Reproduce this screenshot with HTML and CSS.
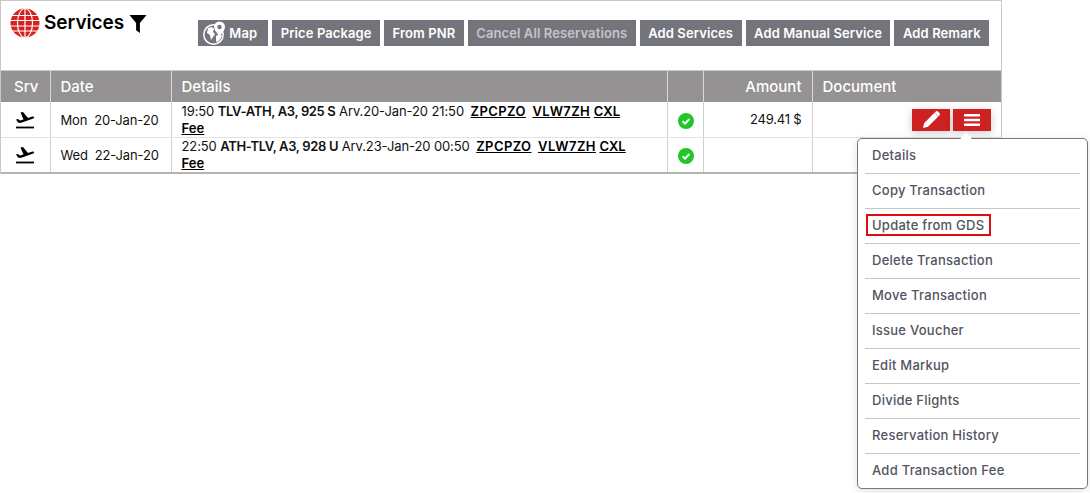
FILE: index.html
```html
<!DOCTYPE html>
<html lang="en">

<head>
    <meta charset="UTF-8">
    <title>Services</title>
    <link rel="stylesheet" href="styles.css">
</head>

<body>
    <div class="panel">
        <div class="toolbar">
            <div class="title">
                <svg class="logo" width="30" height="30" viewBox="0 0 30 30">
                    <circle cx="15" cy="15" r="14.5" fill="#d7201f"/>
                    <g fill="none" stroke="#fff" stroke-width="1.2">
                        <ellipse cx="15" cy="15" rx="7.500" ry="14.5"/>
                        <path d="M15 0v30M2 7.500h26M0 12.500h30M0 18h30M2 23h26"/>
                    </g>
                </svg>
                <h1>Services</h1>
                <svg class="filter" width="18" height="18" viewBox="0 0 18 19">
                    <path d="M0 0h18L11 8.500V19L7 16V8.500z" fill="#000"/>
                </svg>
            </div>
            <div class="actions">
                <button class="btn btn-map">
                    <svg width="23" height="24" viewBox="0 0 23 24">
                        <circle cx="10.500" cy="13.500" r="9.700" fill="none" stroke="#fff" stroke-width="1.500"/>
                        <path d="M5 7l4-1 2 2-1 3 2 2-2 3-2 3-1-5-3-2zM13 15l4-2 2 2-3 5-3 1z" fill="#fff"/>
                        <circle cx="16.500" cy="6" r="5.500" fill="#fff"/>
                        <path d="M12 9l4.500 7 4.500-7z" fill="#fff"/>
                        <circle cx="16.500" cy="6" r="2.200" fill="#74757c"/>
                    </svg>
                    Map
                </button>
                <button class="btn">Price Package</button>
                <button class="btn">From PNR</button>
                <button class="btn btn-muted">Cancel All Reservations</button>
                <button class="btn">Add Services</button>
                <button class="btn">Add Manual Service</button>
                <button class="btn">Add Remark</button>
            </div>
        </div>

        <table class="services">
            <colgroup>
                <col class="col-srv">
                <col class="col-date">
                <col class="col-details">
                <col class="col-status">
                <col class="col-amount">
                <col class="col-doc">
            </colgroup>
            <thead>
                <tr>
                    <th class="center">Srv</th>
                    <th>Date</th>
                    <th>Details</th>
                    <th></th>
                    <th class="right">Amount</th>
                    <th>Document</th>
                </tr>
            </thead>
            <tbody>
                <tr>
                    <td class="center">
                        <svg class="plane" width="20" height="18" viewBox="0 0 20 18">
                            <path d="M1 16.500h18" stroke="#000" stroke-width="1.800"/>
                            <path d="M1 8.500l2-.5 2 1.500 3.500-1L5.500 1.500 8 1l5 6 4.500-1.500c1.500-.4 2.500 1.200.8 2L5.500 12 3 11.500z" fill="#000"/>
                        </svg>
                    </td>
                    <td class="date">Mon&nbsp; 20-Jan-20</td>
                    <td class="details">19:50 <b>TLV-ATH, A3, 925 S</b> Arv.20-Jan-20 21:50 <a href="#">ZPCPZO</a> <a href="#">VLW7ZH</a> <a class="fee" href="#">CXL<br>Fee</a></td>
                    <td class="center status">
                        <svg width="16" height="16" viewBox="0 0 16 16">
                            <circle cx="8" cy="8" r="8" fill="#22c52a"/>
                            <path d="M4.500 8.200l2.500 2.300 4.500-4.500" fill="none" stroke="#fff" stroke-width="2"/>
                        </svg>
                    </td>
                    <td class="right amount">249.41 $</td>
                    <td class="doc">
                        <div class="doc-btns">
                            <button class="icon-btn">
                                <svg width="17" height="17" viewBox="0 0 17 17">
                                    <path d="M0 17l1.200-5L11.500 1.700l3.800 3.800L5 15.800zM12.500.700c.8-.8 1.800-.8 2.500-.1l1.400 1.400c.7.700.7 1.700-.1 2.500l-.8.700-3.800-3.800z" fill="#fff"/>
                                </svg>
                            </button>
                            <button class="icon-btn">
                                <svg width="16" height="12" viewBox="0 0 16 12">
                                    <path d="M1 0h14a1 1 0 0 1 1 1v1.500H0V1a1 1 0 0 1 1-1zM0 4.700h16v2.600H0zM0 9.500h16V11a1 1 0 0 1-1 1H1a1 1 0 0 1-1-1z" fill="#fff"/>
                                </svg>
                            </button>
                        </div>
                    </td>
                </tr>
                <tr>
                    <td class="center">
                        <svg class="plane" width="20" height="18" viewBox="0 0 20 18">
                            <path d="M1 16.500h18" stroke="#000" stroke-width="1.800"/>
                            <path d="M1 8.500l2-.5 2 1.500 3.500-1L5.500 1.500 8 1l5 6 4.500-1.500c1.500-.4 2.500 1.200.8 2L5.500 12 3 11.500z" fill="#000"/>
                        </svg>
                    </td>
                    <td class="date">Wed&nbsp; 22-Jan-20</td>
                    <td class="details">22:50 <b>ATH-TLV, A3, 928 U</b> Arv.23-Jan-20 00:50 <a href="#">ZPCPZO</a> <a href="#">VLW7ZH</a> <a class="fee" href="#">CXL<br>Fee</a></td>
                    <td class="center status">
                        <svg width="16" height="16" viewBox="0 0 16 16">
                            <circle cx="8" cy="8" r="8" fill="#22c52a"/>
                            <path d="M4.500 8.200l2.500 2.300 4.500-4.500" fill="none" stroke="#fff" stroke-width="2"/>
                        </svg>
                    </td>
                    <td></td>
                    <td></td>
                </tr>
            </tbody>
        </table>
    </div>

    <div class="menu">
        <a href="#">Details</a>
        <a href="#">Copy Transaction</a>
        <a href="#"><span class="marked">Update from GDS</span></a>
        <a href="#">Delete Transaction</a>
        <a href="#">Move Transaction</a>
        <a href="#">Issue Voucher</a>
        <a href="#">Edit Markup</a>
        <a href="#">Divide Flights</a>
        <a href="#">Reservation History</a>
        <a href="#">Add Transaction Fee</a>
    </div>
</body>

</html>
```

FILE: styles.css
```css
body {
    margin: 0;
    font-family: Inter, "Open Sans", sans-serif;
    background-color: #fff;
    color: #111;
    font-size: 13px;
}

.panel {
    width: 1000px;
    border: 1px solid #c8c8c8;
    border-bottom: 0;
}

.toolbar {
    height: 69px;
    display: flex;
    align-items: flex-start;
    border-bottom: 1px solid #c8c8c8;
}

.title {
    display: flex;
    align-items: center;
    padding: 7px 0 0 9px;
}

.logo {
    display: block;
}

.title h1 {
    margin: 0 0 2px 4px;
    font-size: 19px;
    font-weight: 600;
    color: #000;
}

.filter {
    margin: 1px 0 0 5px;
}

.actions {
    display: flex;
    gap: 4px;
    margin-left: 51px;
    padding-top: 19px;
}

.btn {
    height: 26px;
    padding: 0 8.5px;
    border: 0;
    display: flex;
    align-items: center;
    gap: 3px;
    background-color: #74757c;
    color: #fff;
    font-family: inherit;
    font-size: 13px;
    font-weight: 600;
    letter-spacing: .1px;
    white-space: nowrap;
}

.btn-map {
    padding: 0 11px 0 5px;
}

.btn-muted {
    color: #c4c4c8;
}

.services {
    width: 1000px;
    border-collapse: collapse;
    table-layout: fixed;
    border-bottom: 2px solid #b4b4b4;
}

.col-srv { width: 49px; }
.col-date { width: 121px; }
.col-details { width: 496px; }
.col-status { width: 36px; }
.col-amount { width: 109px; }

.services th {
    height: 31px;
    padding: 0 10px;
    background-color: #949292;
    color: #fff;
    font-size: 15px;
    font-weight: 500;
    text-align: left;
    border-left: 1px solid #d8d8d8;
}

.services th:first-child,
.services td:first-child {
    border-left: 0;
}

.services td {
    height: 35px;
    padding: 0 10px;
    border-left: 1px solid #d0d0d0;
    border-bottom: 1px solid #e2e2e2;
    vertical-align: middle;
}

.services tr:last-child td {
    height: 34px;
    border-bottom: 0;
}

.services .center {
    text-align: center;
    padding: 0;
}

.services th.center {
    padding-left: 2px;
}

.services .right {
    text-align: right;
}

.plane {
    display: block;
    margin: 0 auto;
}

.services .status {
    padding-left: 2px;
}

.status svg {
    display: block;
    margin: 2px auto 0;
}

.services .date {
    white-space: nowrap;
    padding-right: 0;
    letter-spacing: -.15px;
}

.services .details {
    line-height: 17px;
    white-space: nowrap;
    letter-spacing: -.1px;
}

.details b {
    font-weight: 600;
    letter-spacing: -.35px;
}

.details a {
    margin-left: 3px;
    color: #000;
    font-weight: 600;
    letter-spacing: .4px;
}

.details a.fee {
    margin-left: 0;
    letter-spacing: .05px;
}

.services .amount {
    height: 33px;
    padding-bottom: 2px;
    letter-spacing: -.2px;
}

.services .doc {
    padding: 0 10px 0 0;
}

.doc-btns {
    display: flex;
    justify-content: flex-end;
    gap: 3px;
}

.icon-btn {
    width: 38px;
    height: 22px;
    padding: 0;
    border: 0;
    background-color: #cd2122;
    display: flex;
    align-items: center;
    justify-content: center;
    box-shadow: 0 2px 8px rgba(0, 0, 0, 0.2);
}

.menu {
    position: absolute;
    left: 857px;
    top: 138px;
    width: 215px;
    height: 349px;
    padding: 0 7px;
    display: flex;
    flex-direction: column;
    background-color: #fff;
    border: 1px solid #777;
    border-radius: 5px;
    box-shadow: 0 2px 8px rgba(0, 0, 0, 0.12);
}

.menu::before {
    content: "";
    position: absolute;
    left: 104px;
    top: -5px;
    width: 8px;
    height: 8px;
    background-color: #fff;
    transform: rotate(45deg);
}

.menu a {
    flex: 1;
    display: flex;
    align-items: center;
    padding: 0 0 2px 7px;
    color: #51555f;
    font-size: 13px;
    font-weight: 500;
    letter-spacing: .25px;
    text-decoration: none;
    border-bottom: 1px solid #c6c6c6;
}

.menu a:last-child {
    border-bottom: 0;
}

.marked {
    margin-left: -4px;
    padding: 1px 5px 1px 4px;
    outline: 2px solid #e2090f;
}
```
